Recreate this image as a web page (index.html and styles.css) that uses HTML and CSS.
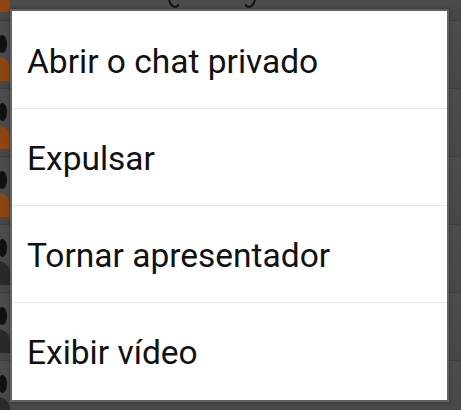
FILE: index.html
```html
<!DOCTYPE html>
<html>
<head>
<meta charset="utf-8">
<link rel="stylesheet" href="styles.css">
</head>
<body>
<div class="backdrop">
  <div class="bg-row first"><span class="avatar"></span><span class="paren left"></span><span class="paren right"></span></div>
  <div class="bg-row"><span class="avatar"></span></div>
  <div class="bg-row"><span class="avatar"></span></div>
  <div class="bg-row"><span class="avatar"></span></div>
  <div class="bg-row"><span class="avatar dark"></span></div>
  <div class="bg-row"><span class="avatar dark"></span></div>
  <div class="bg-row"><span class="avatar dark"></span></div>
</div>
<div class="dialog">
  <div class="item">Abrir o chat privado</div>
  <div class="item">Expulsar</div>
  <div class="item">Tornar apresentador</div>
  <div class="item">Exibir vídeo</div>
</div>
</body>
</html>
```
FILE: styles.css
```css
html, body {
  margin: 0;
  padding: 0;
}
body {
  width: 461px;
  height: 410px;
  overflow: hidden;
  background: #474747;
  font-family: Roboto, "Noto Sans", sans-serif;
  position: relative;
}
.backdrop {
  display: flex;
  flex-direction: column;
}
.bg-row {
  height: 67px;
  border-bottom: 1px solid #3c3c3c;
  position: relative;
  background: linear-gradient(#4c4c4c, #464646);
}
.bg-row.first {
  height: 20px;
}
.avatar {
  position: absolute;
  left: -14px;
  top: 8px;
  width: 24px;
  height: 50px;
}
.avatar::before {
  content: "";
  position: absolute;
  left: 12px;
  top: 6px;
  width: 9px;
  height: 18px;
  border-radius: 50%;
  background: #111;
}
.avatar::after {
  content: "";
  position: absolute;
  left: 0;
  top: 28px;
  width: 24px;
  height: 24px;
  border-radius: 50% 50% 0 0;
  background: #8d4512;
}
.avatar.dark::after {
  background: #2a2a2a;
}
.first .avatar {
  top: -40px;
}
.paren {
  position: absolute;
  top: -14px;
  width: 10px;
  height: 18px;
  border: 2px solid #111;
  border-radius: 50%;
}
.paren.left {
  left: 168px;
  border-right-color: transparent;
  border-top-color: transparent;
}
.paren.right {
  left: 242px;
  border-left-color: transparent;
  border-top-color: transparent;
}
.dialog {
  position: absolute;
  left: 10px;
  top: 9px;
  width: 435px;
  padding-top: 1px;
  border: 2px solid #626262;
  background: #fff;
  display: flex;
  flex-direction: column;
  box-shadow: 0 0 3px rgba(0,0,0,0.4);
}
.item {
  box-sizing: border-box;
  height: 97px;
  display: flex;
  align-items: center;
  padding-left: 15px;
  padding-top: 2px;
  font-size: 33.5px;
  color: #111;
  border-bottom: 1px solid #e6e6e6;
}
.item:last-child {
  border-bottom: none;
}
```
